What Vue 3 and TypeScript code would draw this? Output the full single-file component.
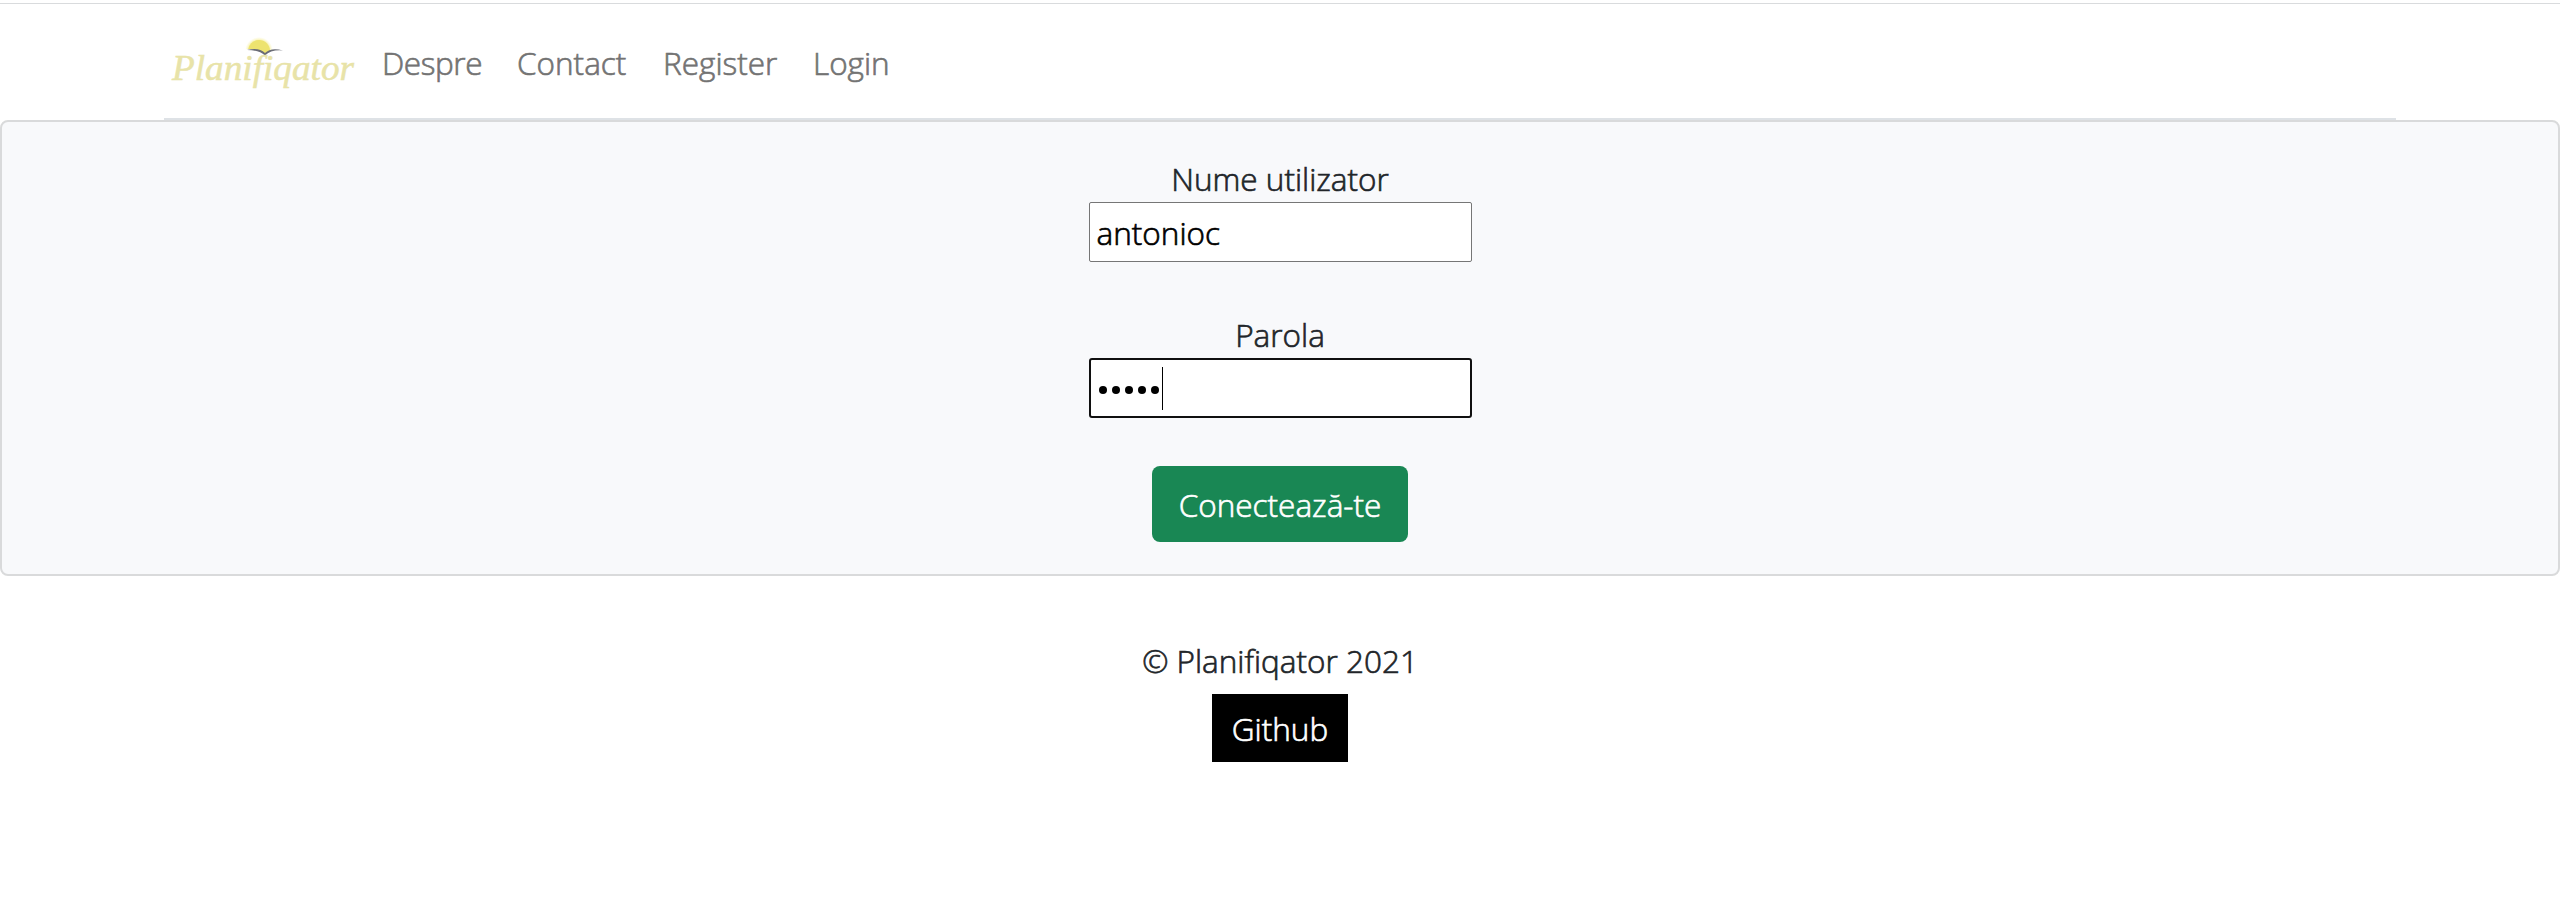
<script setup lang="ts">
import { ref } from 'vue'

interface NavItem {
  label: string
  key: string
}

const navItems: NavItem[] = [
  { label: 'Despre', key: 'about' },
  { label: 'Contact', key: 'contact' },
  { label: 'Register', key: 'register' },
  { label: 'Login', key: 'login' },
]

const username = ref('antonioc')
const passwordLength = ref(5)
</script>

<template>
  <div class="page">
    <header class="header">
      <a class="brand">
        <svg width="190" height="58" viewBox="0 0 190 58">
          <defs>
            <radialGradient id="glow">
              <stop offset="0.75" stop-color="#f3ea7c" stop-opacity="0.7" />
              <stop offset="1" stop-color="#f8f2a8" stop-opacity="0" />
            </radialGradient>
            <clipPath id="horizon"><path d="M72 0H118V15Q103 11 97 18Q90 11 72 14Z" /></clipPath>
          </defs>
          <g clip-path="url(#horizon)">
            <ellipse cx="91" cy="15" rx="14" ry="14" fill="url(#glow)" />
            <ellipse cx="91" cy="15" rx="11" ry="11" fill="#ede36f" />
          </g>
          <path d="M79 14Q91 11 97 17Q103 11 115 14.500Q103 13.500 97 19.500Q91 14 79 14Z" fill="#6b6d76" />
          <text class="wordmark" x="4" y="44" textLength="182" lengthAdjust="spacingAndGlyphs">Planifiqator</text>
        </svg>
      </a>
      <nav class="nav">
        <a v-for="item in navItems" :key="item.key" :class="['link', item.key]">{{ item.label }}</a>
      </nav>
    </header>
    <main class="card">
      <form class="form">
        <label class="label">Nume utilizator</label>
        <div class="field"><span class="value">{{ username }}</span></div>
        <label class="label pass">Parola</label>
        <div class="field focused">
          <i v-for="n in passwordLength" :key="n" class="dot"></i>
          <i class="caret"></i>
        </div>
        <button type="button" class="submit">Conectează-te</button>
      </form>
    </main>
    <footer class="footer">
      <p class="copy">© Planifiqator 2021</p>
      <a class="github">Github</a>
    </footer>
  </div>
</template>

<style>
body {
  background: #fff;
}
</style>

<style scoped>
.page {
  box-sizing: border-box;
  height: 906px;
  padding-top: 3px;
  overflow: hidden;
  font-family: "Open Sans", "Noto Sans", sans-serif;
  font-size: 31.5px;
  font-weight: 300;
  line-height: 48px;
  -webkit-text-stroke: 0.65px currentColor;
  color: #212529;
  background: linear-gradient(#d9dbdd, #d9dbdd) 0 3px / 100% 1px no-repeat #fff;
}
.header {
  display: flex;
  box-sizing: border-box;
  width: 2232px;
  height: 117px;
  margin: 0 auto;
  padding-left: 4px;
  border-bottom: 2px solid #dee2e6;
}
.brand {
  width: 190px;
  margin-top: 33px;
}
.wordmark {
  font-family: "Liberation Serif", serif;
  font-size: 36px;
  font-style: italic;
  font-weight: 400;
  fill: #e8e3a8;
  -webkit-text-stroke: 0;
  stroke: #e8e3a8;
  stroke-width: 0.5px;
}
.nav {
  display: flex;
  padding: 36px 0 0 24px;
}
.link {
  color: #737373;
  white-space: nowrap;
}
.about {
  width: 135px;
  letter-spacing: -0.4px;
}
.contact {
  width: 146px;
}
.register {
  width: 150px;
}
.card {
  box-sizing: border-box;
  height: 456px;
  padding-top: 33px;
  border: 2px solid #d9dadb;
  border-radius: 8px;
  background: #f8f9fb;
}
.form {
  display: flex;
  flex-direction: column;
  align-items: center;
}
.label {
  height: 47px;
  white-space: nowrap;
}
.pass {
  margin-top: 49px;
}
.field {
  display: flex;
  align-items: center;
  box-sizing: border-box;
  width: 383px;
  height: 60px;
  padding-left: 7px;
  border: 1px solid #767676;
  border-radius: 2px;
  background: #fff;
  color: #000;
}
.value {
  padding-top: 2px;
}
.focused {
  gap: 5px;
  padding-left: 8px;
  border: 2px solid #101010;
  border-radius: 3px;
}
.dot {
  width: 8px;
  height: 8px;
  margin-top: 4px;
  border-radius: 50%;
  background: #000;
}
.caret {
  width: 1px;
  height: 43px;
  margin-left: -2px;
  background: #000;
}
.submit {
  width: 256px;
  height: 76px;
  margin-top: 48px;
  padding: 2px 0 0;
  border: 0;
  border-radius: 8px;
  background: #198754;
  color: #fff;
  font: inherit;
}
.footer {
  display: flex;
  flex-direction: column;
  align-items: center;
}
.copy {
  margin: 61px 0 9px;
}
.github {
  width: 136px;
  height: 68px;
  background: #000;
  color: #fff;
  line-height: 70px;
  text-align: center;
}
</style>
